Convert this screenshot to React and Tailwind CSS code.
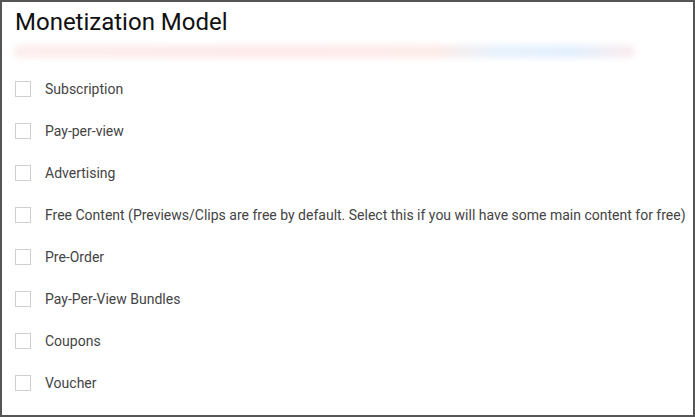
import React from "react";

const options = [
  "Subscription",
  "Pay-per-view",
  "Advertising",
  "Free Content (Previews/Clips are free by default. Select this if you will have some main content for free)",
  "Pre-Order",
  "Pay-Per-View Bundles",
  "Coupons",
  "Voucher",
];

const App = () => {
  return (
    <div className="w-[695px] h-[417px] bg-white border-2 border-[#555] font-['Roboto',sans-serif] overflow-hidden">
      <div className="px-[13px] pt-[5px]">
        <h1 className="text-[24px] leading-[30px] text-[#111]">Monetization Model</h1>
        <div className="mt-[8px] h-[13px] w-[622px] -ml-[2px] rounded-full blur-[3px] bg-[linear-gradient(90deg,#fdeeee_0%,#fdeaea_40%,#fdece9_68%,#e6f2fd_78%,#e3f0fd_90%,#fbecef_100%)]" />
        <div className="mt-[10px] flex flex-col">
          {options.map((opt, i) => (
            <label key={i} className="flex items-center h-[42px]">
              <span className="w-[16px] h-[16px] border border-[#cfcfcf] bg-white shrink-0" />
              <span className="ml-[14px] text-[14px] text-[#444] whitespace-nowrap">{opt}</span>
            </label>
          ))}
        </div>
      </div>
    </div>
  );
};

export default App;
